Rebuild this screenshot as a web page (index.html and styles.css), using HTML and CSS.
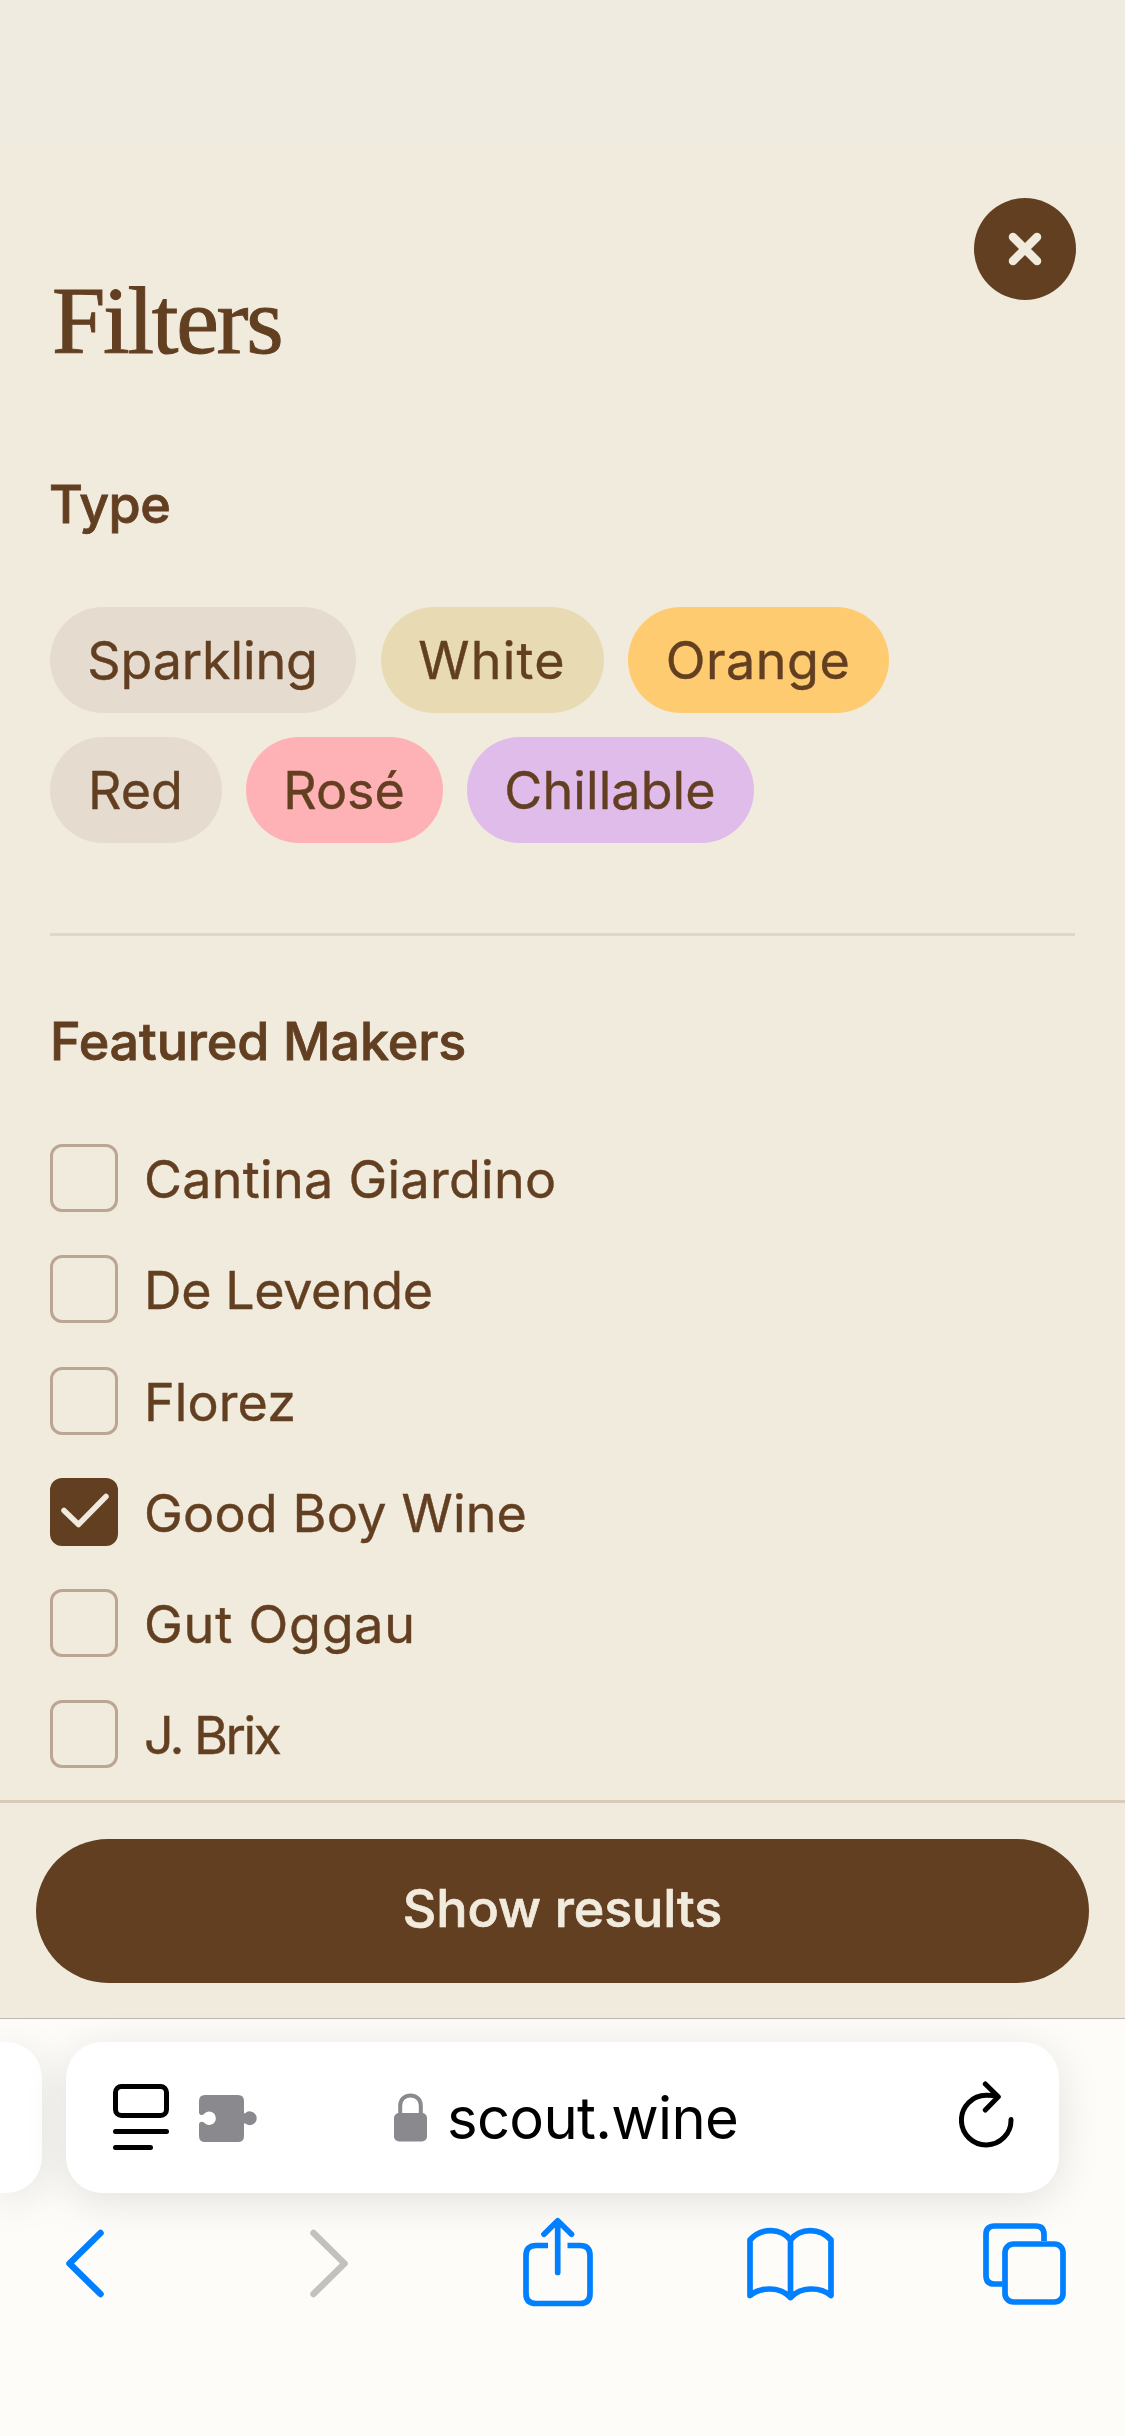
FILE: index.html
```html
<!DOCTYPE html>
<html lang="en">
<head>
<meta charset="utf-8">
<title>Scout Wine – Filters</title>
<link rel="stylesheet" href="styles.css">
</head>
<body>
<div class="status-bar"></div>
<main class="panel">
  <header class="panel-head">
    <h1 class="title">Filters</h1>
    <button class="close" aria-label="Close">
      <svg width="34" height="34" viewBox="0 0 34 34"><path d="M5 5L29 29M29 5L5 29"/></svg>
    </button>
  </header>
  <section class="types">
    <h2 class="heading heading-type">Type</h2>
    <div class="chips">
      <span class="chip sparkling">Sparkling</span>
      <span class="chip white">White</span>
      <span class="chip orange">Orange</span>
      <span class="chip red">Red</span>
      <span class="chip rose">Rosé</span>
      <span class="chip chillable">Chillable</span>
    </div>
  </section>
  <section class="makers">
    <h2 class="heading">Featured Makers</h2>
    <ul class="maker-list">
      <li class="maker"><span class="box"></span><span class="name cantina">Cantina Giardino</span></li>
      <li class="maker"><span class="box"></span><span class="name levende">De Levende</span></li>
      <li class="maker"><span class="box"></span><span class="name florez">Florez</span></li>
      <li class="maker"><span class="box checked"><svg width="68" height="68" viewBox="0 0 68 68"><path d="M14 32.500L28.500 46.500L56 18.500"/></svg></span><span class="name goodboy">Good Boy Wine</span></li>
      <li class="maker"><span class="box"></span><span class="name oggau">Gut Oggau</span></li>
      <li class="maker"><span class="box"></span><span class="name brix">J. Brix</span></li>
    </ul>
  </section>
</main>
<div class="action">
  <button class="show">Show results</button>
</div>
<footer class="browser">
  <div class="tabs">
    <div class="tab-prev"></div>
    <div class="address">
      <svg class="reader" width="56" height="66" viewBox="0 0 56 66"><rect x="2.500" y="2.500" width="51" height="29" rx="6"/><path d="M2.500 47.500H53.500M2.500 63.500H37.500"/></svg>
      <svg class="puzzle" width="58" height="47" viewBox="0 0 58 47"><path d="M6 0H39Q45 0 45 6V17C45 19 46.500 18.500 47 17.500A6.900 6.900 0 1 1 47 29C46.500 28 45 27.500 45 29.500V41Q45 47 39 47H6Q0 47 0 41V29.500C0 26.500 3 26 5 27.500A6.700 6.700 0 1 0 5 19C3 21 0 20 0 17.500V6Q0 0 6 0Z"/></svg>
      <svg class="lock" width="33" height="49" viewBox="0 0 33 49"><rect y="20" width="33" height="28.500" rx="5"/><path d="M6.200 22V12.500C6.200 -1 26.800 -1 26.800 12.500V22"/></svg>
      <span class="url">scout.wine</span>
      <svg class="reload" width="56" height="68" viewBox="0 0 56 68"><path d="M52 38.500A24.800 24.800 0 1 1 27.200 14.300Q33 14.200 38.500 15.700M26.300 3L39.300 15.800L26.300 29"/></svg>
    </div>
  </div>
  <nav class="toolbar">
    <svg class="tool back" width="38" height="96" viewBox="0 0 38 96"><path d="M34.500 19L3.500 49.500L34.500 80"/></svg>
    <svg class="tool forward" width="38" height="96" viewBox="0 0 38 96"><path d="M3.500 19L34.500 49.500L3.500 80"/></svg>
    <svg class="tool share" width="70" height="96" viewBox="0 0 70 96"><path class="flat" d="M25 31.500H13Q3 31.500 3 41.500V79.500Q3 89.500 13 89.500H57Q67 89.500 67 79.500V41.500Q67 31.500 57 31.500H44.500"/><path d="M34.700 58.500V7M21 20.200L34.700 6.800L48.500 20.200"/></svg>
    <svg class="tool book" width="87" height="96" viewBox="0 0 87 96"><path d="M43.500 26C34 13.500 14 13.500 3 26V81.500C14 72.500 33 72.500 43.500 83.500C54 72.500 73 72.500 84 81.500V26C73 13.500 53 13.500 43.500 26V83.500"/></svg>
    <svg class="tool pages" width="83" height="96" viewBox="0 0 83 96"><path class="flat" d="M61 27V20.500Q61 12 52.500 12H11.500Q3 12 3 20.500V61.500Q3 70 11.500 70H19.500"/><rect x="22" y="30" width="58" height="58" rx="8.500"/></svg>
  </nav>
</footer>
</body>
</html>
```
FILE: styles.css
```css
*{box-sizing:border-box;margin:0;padding:0}
body{width:1125px;height:2436px;background:#f1ebdd;font-family:Inter,"Liberation Sans",sans-serif;color:#633f22;font-size:52px;overflow:hidden}
svg{display:block;flex:none}
path,rect{fill:none;stroke-linecap:round;stroke-linejoin:round}

.status-bar{height:146px;background:#efebe0}
.panel{height:1654px;padding:52px 50px 0}
.panel-head{display:flex;justify-content:space-between;height:277px}
.title{font:400 96px/110px "Liberation Serif",serif;padding-top:68px;padding-left:2px;letter-spacing:-2.3px;-webkit-text-stroke:1px #633f22}
.close{width:102px;height:102px;margin-right:-1px;border:0;border-radius:50%;background:#633f22;display:grid;place-items:center}
.close path{stroke:#f1ebdd;stroke-width:8.500}
.heading{font-size:52px;font-weight:500;line-height:60px;white-space:nowrap;letter-spacing:-.1px;-webkit-text-stroke:.8px #633f22}
.heading-type{letter-spacing:-.5px;margin-left:-1px}

.types{height:461px;border-bottom:3px solid #e2d6c8}
.chips{display:flex;flex-wrap:wrap;gap:24px;margin-top:72px}
.chip{height:106px;padding-right:1px;line-height:107px;text-align:center;border-radius:53px;-webkit-text-stroke:.4px #633f22}
.sparkling{width:306px;margin-right:1px;background:#e5dccf;letter-spacing:-.1px}
.white{width:223px;background:#e8dbb4;letter-spacing:1.2px}
.orange{width:261px;background:#ffcb70;letter-spacing:.5px}
.red{width:172px;background:#e5dccf}
.rose{width:197px;background:#ffb2b6}
.chillable{width:287px;background:#e0bceb;letter-spacing:.1px}

.makers{padding-top:76px}
.maker-list{list-style:none;margin-top:72px;display:grid;gap:43.25px}
.maker{display:flex;height:68px;gap:26px;line-height:72px;white-space:nowrap;-webkit-text-stroke:.4px #633f22}
.box{width:68px;height:68px;flex:none;border:3px solid #bba593;border-radius:12px}
.checked{border:0;background:#633f22}
.checked path{stroke:#f1ebdd;stroke-width:5.500}
.cantina{letter-spacing:.3px}
.levende{letter-spacing:-.4px}
.florez{letter-spacing:.1px}
.goodboy{letter-spacing:.2px}
.oggau{letter-spacing:.8px}
.brix{letter-spacing:-2.500px}

.action{height:218px;border-top:3px solid #d8cbb9;padding:36px}
.show{width:1053px;height:144px;padding-bottom:5px;border:0;border-radius:72px;background:#633f22;color:#f1ebdd;font:500 52px Inter,sans-serif;letter-spacing:-.1px;-webkit-text-stroke:.7px #f1ebdd}

.browser{height:418px;background:#fdfcf8;border-top:1px solid #bcb9b4}
.tabs{display:flex;padding-top:23px;gap:24px}
.tab-prev{width:42px;height:151px;background:#fff;border-radius:0 36px 36px 0;box-shadow:0 8px 44px rgba(0,0,0,.11)}
.address{display:flex;align-items:flex-start;width:993px;height:151px;padding-left:47px;background:#fff;border-radius:36px;box-shadow:0 8px 44px rgba(0,0,0,.11)}
.reader{margin-top:42px}
.reader *{stroke:#000;stroke-width:5}
.puzzle{margin:53px 0 0 30px}
.puzzle path{fill:#8a898e}
.lock{margin:51px 0 0 137px}
.lock rect{fill:#8a898e}
.lock path{stroke:#8a898e;stroke-width:4}
.url{width:532px;padding-left:20px;font-size:58px;line-height:153px;letter-spacing:-.7px;color:#000}
.reload{margin-top:39px}
.reload path{stroke:#000;stroke-width:5}
.toolbar{display:grid;grid-template-columns:244px 213px 224px 236px 83px;margin-left:66px;padding-top:21px}
.tool *{stroke:#007fff;stroke-width:5.700}
.back path,.forward path{stroke-width:6.500}
.forward path{stroke:#c2c1be}
.tool .flat{stroke-linecap:butt}
```
